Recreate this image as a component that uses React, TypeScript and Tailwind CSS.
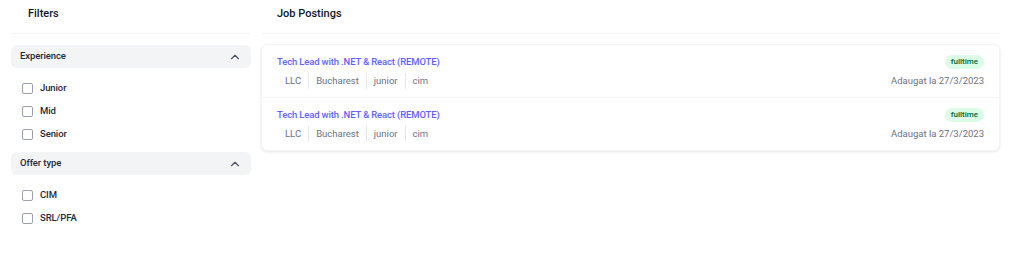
import { ChevronUp } from "lucide-react";

const filterGroups = [
  { title: "Experience", options: ["Junior", "Mid", "Senior"] },
  { title: "Offer type", options: ["CIM", "SRL/PFA"] },
];

const jobs = [
  {
    title: "Tech Lead with .NET & React (REMOTE)",
    meta: ["LLC", "Bucharest", "junior", "cim"],
    type: "fulltime",
    date: "Adaugat la 27/3/2023",
  },
  {
    title: "Tech Lead with .NET & React (REMOTE)",
    meta: ["LLC", "Bucharest", "junior", "cim"],
    type: "fulltime",
    date: "Adaugat la 27/3/2023",
  },
];

function FilterGroup({ title, options }: { title: string; options: string[] }) {
  return (
    <div className="flex flex-col">
      <div className="flex h-[23px] items-center justify-between rounded-md bg-gray-100 pl-[9px] pr-[9px]">
        <span className="text-[9.5px] font-medium tracking-[-0.1px] text-gray-800">{title}</span>
        <ChevronUp className="h-[14px] w-[14px] text-gray-600" strokeWidth={2} />
      </div>
      <div className="flex flex-col gap-[9px] pl-[11px] pt-[13px] pb-[11px]">
        {options.map((o) => (
          <label key={o} className="flex h-[14px] items-center gap-[7px]">
            <span className="h-[11px] w-[11px] rounded-[2px] border border-gray-400 bg-white" />
            <span className="text-[9.5px] font-medium tracking-[-0.1px] text-gray-800">{o}</span>
          </label>
        ))}
      </div>
    </div>
  );
}

export default function App() {
  return (
    <div
      className="flex h-[256px] w-[1024px] gap-[10px] bg-white px-[11px] pt-[5px]"
      style={{ fontFamily: 'Roboto, "Noto Sans", sans-serif' }}
    >
      <aside className="flex w-[240px] flex-col">
        <h2 className="h-[28px] pl-[17px] pt-[1px] text-[11px] font-medium leading-[16px] text-gray-900">
          Filters
        </h2>
        <div className="border-t border-gray-100" />
        <div className="mt-[11px] flex flex-col">
          {filterGroups.map((g) => (
            <FilterGroup key={g.title} title={g.title} options={g.options} />
          ))}
        </div>
      </aside>

      <main className="flex w-[739px] flex-col">
        <h2 className="h-[28px] pl-[16px] pt-[1px] text-[11px] font-medium leading-[16px] text-gray-900">
          Job Postings
        </h2>
        <div className="border-t border-gray-100" />
        <div className="mt-[10px] rounded-md border border-gray-100 bg-white shadow-[0_1px_3px_rgba(0,0,0,0.1)]">
          {jobs.map((job, i) => (
            <div
              key={i}
              className={`flex items-start justify-between px-[15px] pt-[9px] pb-[8px] ${
                i > 0 ? "border-t border-gray-100" : ""
              }`}
            >
              <div className="flex flex-col">
                <a className="text-[9.5px] font-medium leading-[16px] tracking-[-0.15px] text-indigo-500">
                  {job.title}
                </a>
                <div className="mt-[3px] ml-[1px] flex items-center text-[9.5px] leading-[16px] text-gray-500">
                  {job.meta.map((m, j) => (
                    <span
                      key={j}
                      className={`px-[7px] ${j > 0 ? "border-l border-gray-200" : ""}`}
                    >
                      {m}
                    </span>
                  ))}
                </div>
              </div>
              <div className="flex flex-col items-end pt-[1px]">
                <span className="rounded-full bg-green-100 px-[6px] text-[8px] font-medium leading-[14px] text-green-800">
                  {job.type}
                </span>
                <span className="mt-[4px] text-[9.5px] leading-[16px] text-gray-500">
                  {job.date}
                </span>
              </div>
            </div>
          ))}
        </div>
      </main>
    </div>
  );
}
